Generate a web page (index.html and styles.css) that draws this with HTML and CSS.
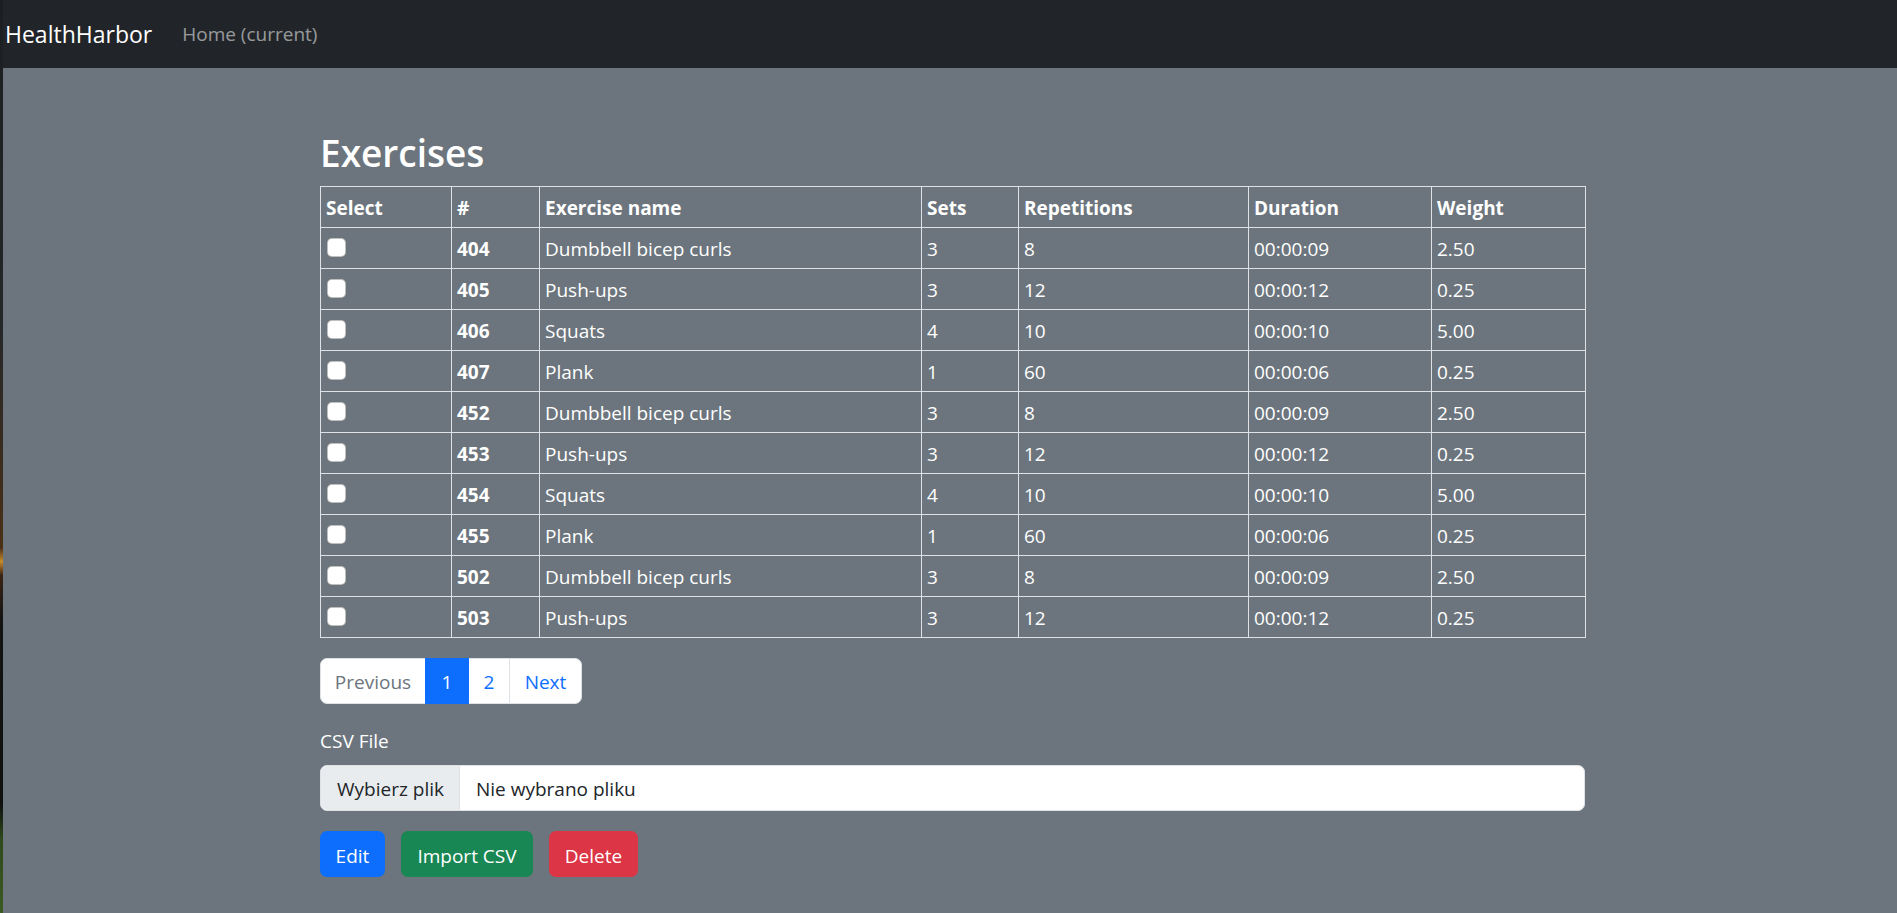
FILE: index.html
```html
<!DOCTYPE html>
<html lang="pl">
<head>
<meta charset="utf-8">
<title>HealthHarbor</title>
<link rel="stylesheet" href="styles.css">
</head>
<body>
<div class="edge"></div>
<div class="page">
  <nav class="navbar">
    <a class="brand" href="#">HealthHarbor</a>
    <a class="nav-link" href="#">Home (current)</a>
  </nav>
  <main class="main">
    <div class="container">
      <h1 class="title">Exercises</h1>
      <table class="table">
        <colgroup>
          <col class="c-select"><col class="c-id"><col class="c-name"><col class="c-sets"><col class="c-reps"><col class="c-dur"><col class="c-weight">
        </colgroup>
        <thead>
          <tr><th>Select</th><th>#</th><th>Exercise name</th><th>Sets</th><th>Repetitions</th><th>Duration</th><th>Weight</th></tr>
        </thead>
        <tbody>
          <tr><td><input class="check" type="checkbox"></td><th>404</th><td>Dumbbell bicep curls</td><td>3</td><td>8</td><td>00:00:09</td><td>2.50</td></tr>
          <tr><td><input class="check" type="checkbox"></td><th>405</th><td>Push-ups</td><td>3</td><td>12</td><td>00:00:12</td><td>0.25</td></tr>
          <tr><td><input class="check" type="checkbox"></td><th>406</th><td>Squats</td><td>4</td><td>10</td><td>00:00:10</td><td>5.00</td></tr>
          <tr><td><input class="check" type="checkbox"></td><th>407</th><td>Plank</td><td>1</td><td>60</td><td>00:00:06</td><td>0.25</td></tr>
          <tr><td><input class="check" type="checkbox"></td><th>452</th><td>Dumbbell bicep curls</td><td>3</td><td>8</td><td>00:00:09</td><td>2.50</td></tr>
          <tr><td><input class="check" type="checkbox"></td><th>453</th><td>Push-ups</td><td>3</td><td>12</td><td>00:00:12</td><td>0.25</td></tr>
          <tr><td><input class="check" type="checkbox"></td><th>454</th><td>Squats</td><td>4</td><td>10</td><td>00:00:10</td><td>5.00</td></tr>
          <tr><td><input class="check" type="checkbox"></td><th>455</th><td>Plank</td><td>1</td><td>60</td><td>00:00:06</td><td>0.25</td></tr>
          <tr><td><input class="check" type="checkbox"></td><th>502</th><td>Dumbbell bicep curls</td><td>3</td><td>8</td><td>00:00:09</td><td>2.50</td></tr>
          <tr><td><input class="check" type="checkbox"></td><th>503</th><td>Push-ups</td><td>3</td><td>12</td><td>00:00:12</td><td>0.25</td></tr>
        </tbody>
      </table>
      <ul class="pagination">
        <li class="page-item disabled p-prev"><span>Previous</span></li>
        <li class="page-item active p-1"><span>1</span></li>
        <li class="page-item p-2"><a href="#">2</a></li>
        <li class="page-item p-next"><a href="#">Next</a></li>
      </ul>
      <label class="label">CSV File</label>
      <div class="file">
        <span class="file-btn">Wybierz plik</span>
        <span class="file-name">Nie wybrano pliku</span>
      </div>
      <div class="actions">
        <button class="btn btn-edit">Edit</button>
        <button class="btn btn-import">Import CSV</button>
        <button class="btn btn-delete">Delete</button>
      </div>
    </div>
  </main>
</div>
</body>
</html>
```
FILE: styles.css
```css
* { box-sizing: border-box; }
html, body { margin: 0; height: 100%; }
body {
  display: flex;
  font-family: "Open Sans", "Noto Sans", sans-serif;
  font-size: 19px;
  line-height: 29px;
  color: #fff;
  background: #6c757d;
  overflow: hidden;
}
.edge {
  width: 3px;
  flex: none;
  background: linear-gradient(to bottom, #1c1f22 0%, #24272a 35%, #3a2c1e 50%, #4a3016 60%, #c98a2a 61.5%, #3a2416 63%, #141414 68%, #0f1010 88%, #2f4a1c 92%, #3b5a22 100%);
}
.page {
  flex: 1;
  display: flex;
  flex-direction: column;
  min-width: 0;
}
.navbar {
  height: 68px;
  flex: none;
  background: #212529;
  display: flex;
  align-items: center;
  padding-left: 2px;
}
.brand {
  font-size: 23px;
  line-height: 36px;
  color: #fff;
  text-decoration: none;
  margin-right: 30px;
}
.nav-link {
  font-size: 19px;
  color: rgba(255, 255, 255, 0.55);
  text-decoration: none;
}
.main {
  flex: 1;
  background: #6c757d;
  padding-top: 62px;
}
.container {
  width: 1265px;
  margin-left: calc(50% - 630px);
}
.title {
  margin: 0 0 10px;
  font-size: 37px;
  line-height: 46px;
  font-weight: 600;
}
.table {
  width: 1265px;
  table-layout: fixed;
  border-collapse: collapse;
  margin-bottom: 20px;
}
.c-select { width: 131px; }
.c-id { width: 88px; }
.c-name { width: 382px; }
.c-sets { width: 97px; }
.c-reps { width: 230px; }
.c-dur { width: 183px; }
.c-weight { width: 154px; }
.table th, .table td {
  border: 1px solid #dee2e6;
  padding: 6px 5px 4px;
  line-height: 30px;
  text-align: left;
  vertical-align: top;
  font-size: 19px;
}
.table th { font-weight: 700; }
.table td { font-weight: 400; }
.check {
  appearance: none;
  -webkit-appearance: none;
  display: block;
  width: 19px;
  height: 19px;
  margin: 4px 0 0 1px;
  background: #fff;
  border: 1px solid rgba(0, 0, 0, 0.25);
  border-radius: 5px;
}
.pagination {
  list-style: none;
  margin: 0 0 23px;
  padding: 0;
  display: flex;
}
.page-item > * {
  display: flex;
  align-items: center;
  justify-content: center;
  height: 46px;
  padding-top: 2px;
  background: #fff;
  border: 1px solid #dee2e6;
  color: #0d6efd;
  text-decoration: none;
  font-size: 19px;
}
.page-item + .page-item { margin-left: -1px; }
.p-prev > * { width: 106px; border-radius: 7px 0 0 7px; color: #6c757d; }
.p-1 > * { width: 44px; background: #0d6efd; border-color: #0d6efd; color: #fff; position: relative; }
.p-2 > * { width: 42px; }
.p-next > * { width: 73px; border-radius: 0 7px 7px 0; }
.label {
  display: block;
  margin-bottom: 9px;
  font-size: 19px;
  line-height: 29px;
}
.file {
  display: flex;
  height: 46px;
  background: #fff;
  border: 1px solid #dee2e6;
  border-radius: 7px;
  overflow: hidden;
  color: #212529;
  margin-bottom: 20px;
}
.file-btn {
  width: 139px;
  background: #e9ecef;
  border-right: 1px solid #dee2e6;
  padding: 2px 0 0 16px;
  display: flex;
  align-items: center;
}
.file-name {
  padding: 2px 0 0 16px;
  display: flex;
  align-items: center;
}
.actions {
  display: flex;
  gap: 16px;
}
.btn {
  height: 46px;
  border: 1px solid transparent;
  border-radius: 7px;
  color: #fff;
  font-family: inherit;
  font-size: 19px;
  padding: 3px 0 0;
  text-align: center;
}
.btn-edit { width: 65px; background: #0d6efd; }
.btn-import { width: 132px; background: #198754; }
.btn-delete { width: 89px; background: #dc3545; }
```
